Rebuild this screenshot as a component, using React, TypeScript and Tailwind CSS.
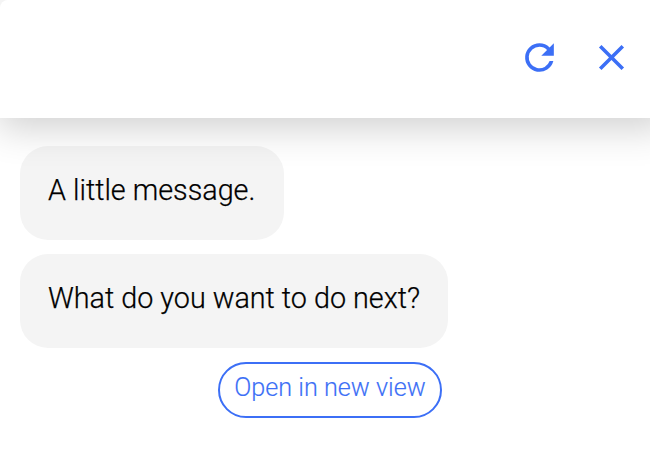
export default function App() {
  return (
    <main className="flex h-[450px] w-[650px] flex-col overflow-hidden bg-white font-['Roboto',sans-serif] font-light">
      <div className="relative shrink-0 bg-[#f4f4f4] shadow-[8px_0px_36px_10px_rgba(0,0,0,0.19)]">
        <header className="flex h-[118px] items-center justify-end gap-[29px] rounded-tl-[8px] bg-white pr-[17.5px] pb-[3px] text-[#3c6ff6]">
          <button aria-label="Restart">
            <svg viewBox="0 0 24 24" className="block size-[43px]" fill="currentColor">
              <path d="M17.65 6.35A7.96 7.96 0 0 0 12 4a8 8 0 1 0 7.73 10h-2.08A6 6 0 1 1 12 6c1.66 0 3.14.69 4.22 1.78L13 11h7V4z" />
            </svg>
          </button>
          <button aria-label="Close">
            <svg viewBox="0 0 24 24" className="block size-[43px]" fill="currentColor">
              <path d="M19 6.41 17.59 5 12 10.59 6.41 5 5 6.41 10.59 12 5 17.59 6.41 19 12 13.41 17.59 19 19 17.59 13.41 12z" />
            </svg>
          </button>
        </header>
      </div>
      <section className="flex flex-col items-start px-5 pt-7 text-[28.75px] text-black">
        <p className="mb-[14px] flex h-[94px] w-[264px] items-center rounded-[28px] bg-[#f4f4f4] pb-[4px] pl-7 whitespace-nowrap [-webkit-text-stroke:0.25px]">A little message.</p>
        <p className="mb-[14px] flex h-[94px] w-[428px] items-center rounded-[28px] bg-[#f4f4f4] pb-[4px] pl-7 whitespace-nowrap [-webkit-text-stroke:0.25px]">What do you want to do next?</p>
        <button className="ml-[198px] flex h-[56px] w-[224px] items-center justify-center rounded-full border-2 border-[#3c6ff6] pb-[4px] text-[25.2px] whitespace-nowrap text-[#3c6ff6] [-webkit-text-stroke:0.15px]">Open in new view</button>
      </section>
    </main>
  );
}
